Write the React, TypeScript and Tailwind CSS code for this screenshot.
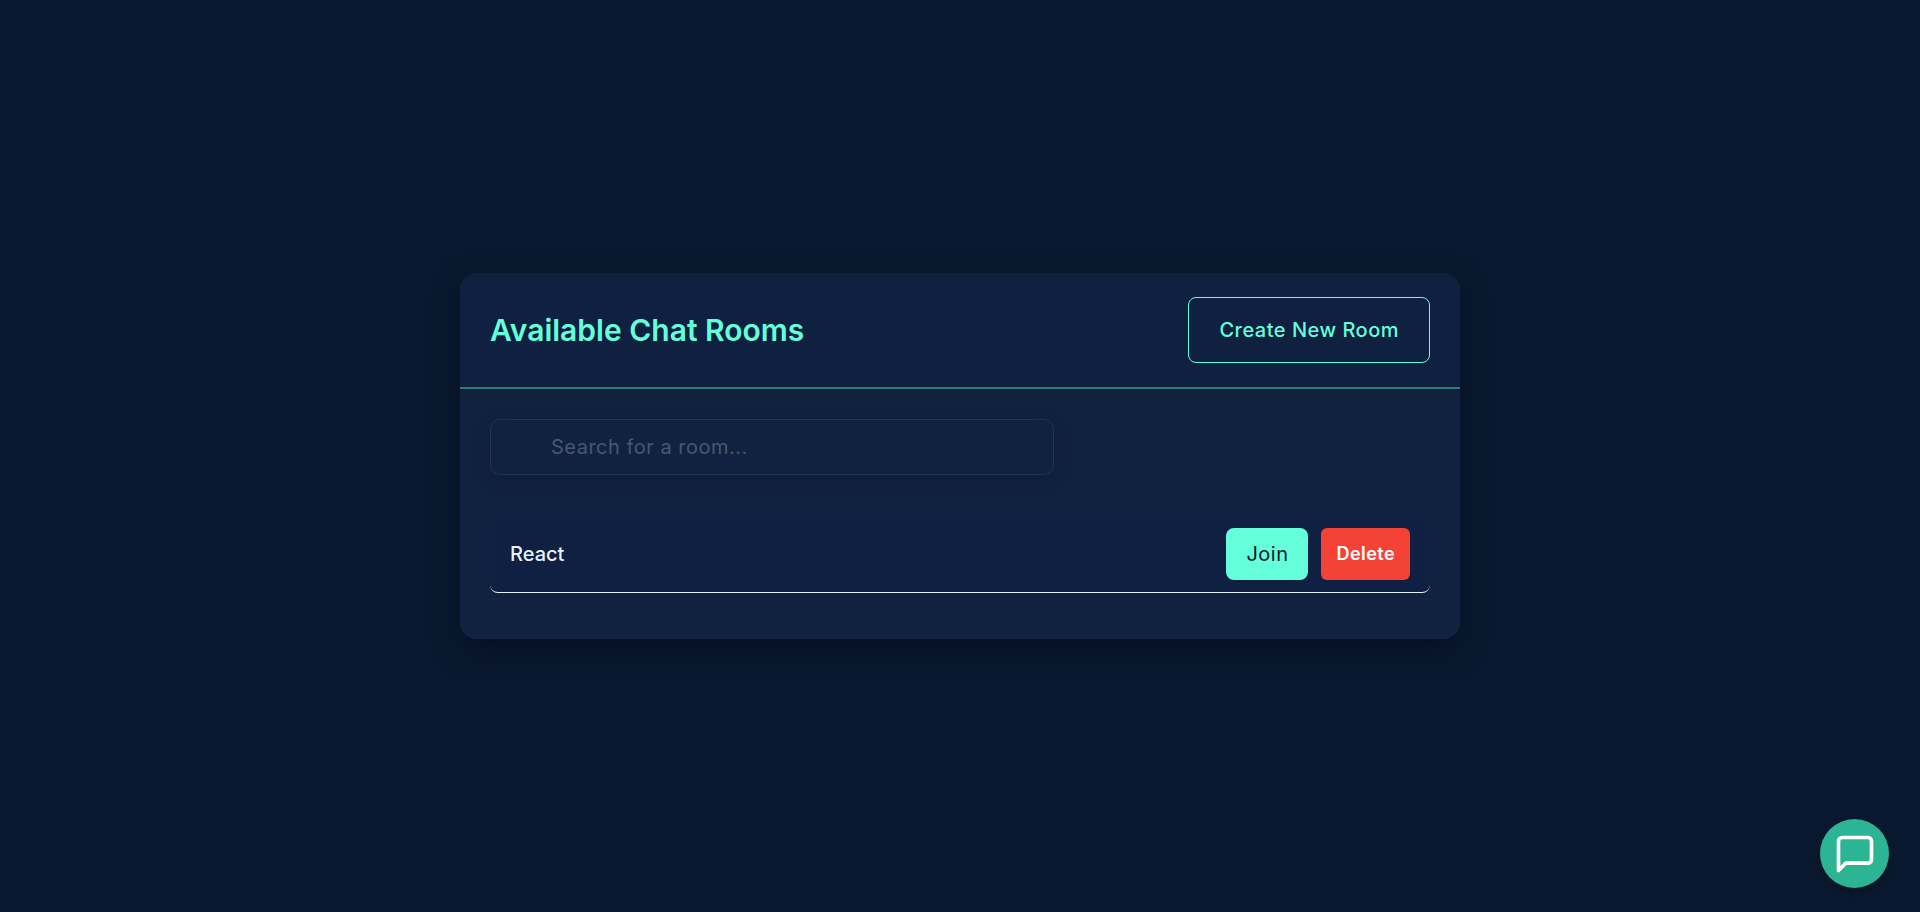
import { useState } from "react";

const rooms = ["React"];

export default function App() {
  const [query, setQuery] = useState("");
  const visible = rooms.filter((room) => room.toLowerCase().includes(query.toLowerCase()));

  return (
    <div className="flex min-h-screen items-center justify-center bg-[#0a192f] font-[Inter,sans-serif] text-[#e6f1ff]">
      <main className="w-full max-w-[1000px] overflow-hidden rounded-2xl bg-[#112240] shadow-[0_10px_30px_rgba(2,12,27,0.6)]">
        <header className="flex items-center justify-between border-b-2 border-[#26806f] bg-[#0f2040] px-[30px] py-6">
          <h1 className="text-[30px] font-semibold text-[#64ffda]">Available Chat Rooms</h1>
          <button
            type="button"
            className="h-[66px] rounded-lg border border-[#64ffda] px-[30px] text-xl font-medium tracking-wide text-[#64ffda]"
          >
            Create New Room
          </button>
        </header>
        <div className="px-[30px] pt-[30px] pb-[46px]">
          <input
            type="search"
            aria-label="Search for a room"
            placeholder="Search for a room..."
            value={query}
            onChange={(event) => setQuery(event.target.value)}
            className="block h-14 w-3/5 rounded-[10px] border border-[#233554] bg-[#112240] pr-5 pl-[60px] text-xl tracking-wide shadow-[0_4px_20px_rgba(2,12,27,0.2)] outline-none placeholder:text-[#495670]"
          />
          <ul className="mt-[41px]">
            {visible.map((room) => (
              <li
                key={room}
                className="flex items-center justify-between rounded-lg border-b border-[#e6f1ff] bg-[#0f2042] px-5 py-3"
              >
                <span className="text-xl font-medium">{room}</span>
                <div className="flex gap-[13px]">
                  <button
                    type="button"
                    className="h-[52px] rounded-lg bg-[#64ffda] px-5 text-xl tracking-wide text-[#0a192f]"
                  >
                    Join
                  </button>
                  <button
                    type="button"
                    className="h-[52px] rounded-md bg-[#f44336] px-[15px] text-lg font-semibold tracking-wide text-white"
                  >
                    Delete
                  </button>
                </div>
              </li>
            ))}
          </ul>
        </div>
      </main>
      <button
        type="button"
        aria-label="Open chat"
        className="fixed right-[31px] bottom-6 flex size-[69px] items-center justify-center rounded-full bg-[#2bb594] text-white shadow-[0_4px_12px_rgba(0,0,0,0.2)]"
      >
        <svg
          viewBox="0 0 24 24"
          className="size-11"
          fill="none"
          stroke="currentColor"
          strokeWidth="2"
          strokeLinecap="round"
          strokeLinejoin="round"
          aria-hidden="true"
        >
          <path d="M21 15a2 2 0 0 1-2 2H7l-4 4V5a2 2 0 0 1 2-2h14a2 2 0 0 1 2 2z" />
        </svg>
      </button>
    </div>
  );
}
